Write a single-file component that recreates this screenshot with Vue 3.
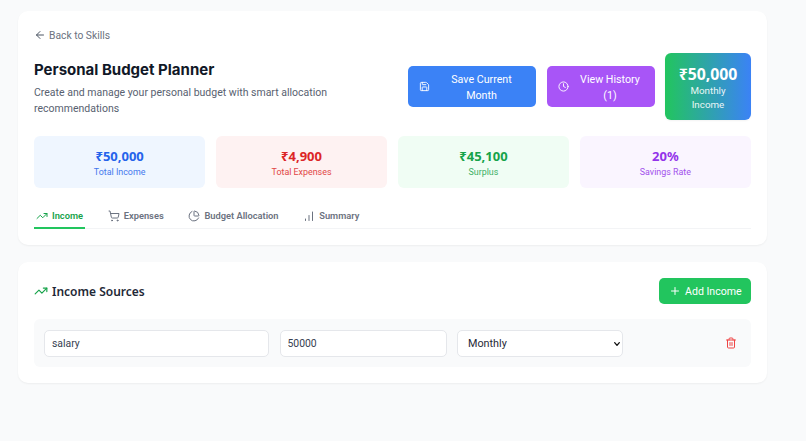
<template>
  <div class="page">
    <section class="card top">
      <a class="back">
        <svg width="12" height="12" viewBox="0 0 24 24" class="ic"><path d="m12 19-7-7 7-7" /><path d="M19 12H5" /></svg>
        <span>Back to Skills</span>
      </a>

      <div class="header">
        <div class="intro">
          <h1>Personal Budget Planner</h1>
          <p>Create and manage your personal budget with smart allocation recommendations</p>
        </div>
        <div class="actions">
          <button class="btn blue">
            <svg width="11" height="11" viewBox="0 0 24 24" class="ic">
              <path d="M15.2 3a2 2 0 0 1 1.4.6l3.8 3.8a2 2 0 0 1 .6 1.4V19a2 2 0 0 1-2 2H5a2 2 0 0 1-2-2V5a2 2 0 0 1 2-2z" />
              <path d="M17 21v-7a1 1 0 0 0-1-1H8a1 1 0 0 0-1 1v7" />
              <path d="M7 3v4a1 1 0 0 0 1 1h7" />
            </svg>
            <span>Save Current Month</span>
          </button>
          <button class="btn purple">
            <svg width="11" height="11" viewBox="0 0 24 24" class="ic"><circle cx="12" cy="12" r="10" /><path d="M12 6v6l4 2" /></svg>
            <span>View History (1)</span>
          </button>
          <div class="monthly">
            <strong>₹50,000</strong>
            <span>Monthly Income</span>
          </div>
        </div>
      </div>

      <div class="stats">
        <div v-for="s in stats" :key="s.label" class="stat" :class="s.tone">
          <strong>{{ s.value }}</strong>
          <span>{{ s.label }}</span>
        </div>
      </div>

      <nav class="tabs">
        <a class="tab active">
          <svg width="12" height="12" viewBox="0 0 24 24" class="ic"><path d="M22 7 13.5 15.5l-5-5L2 17" /><path d="M16 7h6v6" /></svg>
          Income
        </a>
        <a class="tab">
          <svg width="12" height="12" viewBox="0 0 24 24" class="ic">
            <circle cx="8" cy="21" r="1" /><circle cx="19" cy="21" r="1" />
            <path d="M2.05 2.05h2l2.66 12.42a2 2 0 0 0 2 1.58h9.78a2 2 0 0 0 1.95-1.57l1.65-7.43H5.12" />
          </svg>
          Expenses
        </a>
        <a class="tab">
          <svg width="12" height="12" viewBox="0 0 24 24" class="ic">
            <path d="M21 12c.55 0 1-.45.95-1a10 10 0 0 0-8.95-8.95c-.55-.05-1 .4-1 .95v8a1 1 0 0 0 1 1z" />
            <path d="M21.21 15.89A10 10 0 1 1 8 2.83" />
          </svg>
          Budget Allocation
        </a>
        <a class="tab">
          <svg width="12" height="12" viewBox="0 0 24 24" class="ic"><path d="M5 21v-3" /><path d="M12 21V11" /><path d="M19 21V4" /></svg>
          Summary
        </a>
      </nav>
    </section>

    <section class="card sources">
      <div class="sources-head">
        <h2>
          <svg width="14" height="14" viewBox="0 0 24 24" class="ic"><path d="M22 7 13.5 15.5l-5-5L2 17" /><path d="M16 7h6v6" /></svg>
          Income Sources
        </h2>
        <button class="add">
          <svg width="12" height="12" viewBox="0 0 24 24" class="ic"><path d="M5 12h14" /><path d="M12 5v14" /></svg>
          Add Income
        </button>
      </div>
      <div class="row">
        <input class="field name" type="text" value="salary" />
        <input class="field amount" type="text" value="50000" />
        <div class="select-wrap">
          <select class="field freq">
            <option>Monthly</option>
            <option>Yearly</option>
          </select>
          <svg width="8" height="8" viewBox="0 0 24 24" class="ic chevron"><path d="m5 8 7 8 7-8" /></svg>
        </div>
        <button class="trash">
          <svg width="12" height="12" viewBox="0 0 24 24" class="ic">
            <path d="M3 6h18" /><path d="M19 6v14a2 2 0 0 1-2 2H7a2 2 0 0 1-2-2V6" />
            <path d="M8 6V4a2 2 0 0 1 2-2h4a2 2 0 0 1 2 2v2" /><path d="M10 11v6" /><path d="M14 11v6" />
          </svg>
        </button>
      </div>
    </section>
  </div>
</template>

<script setup>
const stats = [
  { value: '₹50,000', label: 'Total Income', tone: 'is-blue' },
  { value: '₹4,900', label: 'Total Expenses', tone: 'is-red' },
  { value: '₹45,100', label: 'Surplus', tone: 'is-green' },
  { value: '20%', label: 'Savings Rate', tone: 'is-purple' },
];
</script>

<style>
html,
body {
  margin: 0;
  background: #f9fafb;
}
</style>

<style scoped>
.page {
  box-sizing: border-box;
  width: 806px;
  height: 441px;
  padding: 11px 39px 0 18px;
  font-family: Roboto, sans-serif;
  background: #f9fafb;
  overflow: hidden;
}

.card {
  background: #fff;
  border-radius: 10px;
  box-shadow: 0 1px 2px rgba(0, 0, 0, 0.05);
  padding: 16px;
}

.ic {
  fill: none;
  stroke: currentColor;
  stroke-width: 2;
  stroke-linecap: round;
  stroke-linejoin: round;
  flex: none;
}

.top {
  height: 234px;
  box-sizing: border-box;
  padding-bottom: 0;
}

.back {
  display: flex;
  align-items: center;
  gap: 3px;
  height: 16px;
  font-size: 10.3px;
  color: #6b7280;
}

.back .ic {
  color: #4b5563;
}

.header {
  display: flex;
  justify-content: space-between;
  align-items: center;
  margin-top: 10px;
}

.intro {
  width: 310px;
  padding-top: 2px;
}

h1 {
  margin: 0 0 4px;
  font-family: Inter, sans-serif;
  font-size: 15px;
  line-height: 22px;
  font-weight: 700;
  color: #111827;
}

.intro p {
  margin: 0;
  font-size: 10.5px;
  line-height: 16px;
  color: #586170;
}

.actions {
  display: flex;
  align-items: center;
  gap: 10.5px;
}

.btn {
  display: flex;
  align-items: center;
  gap: 8px;
  height: 41px;
  padding: 2px 11px 0;
  border: 0;
  border-radius: 5px;
  color: #fff;
  font: 400 10.7px/16px Roboto, sans-serif;
  text-align: center;
}

.btn .ic {
  margin-top: -2px;
}

.btn span {
  flex: 1;
}

.blue {
  width: 128px;
  background: #3b82f6;
}

.purple {
  width: 108px;
  background: #a855f7;
}

.monthly {
  box-sizing: border-box;
  width: 86px;
  height: 67px;
  padding: 11px 14px 0;
  border-radius: 6px;
  background: linear-gradient(to right, #22c55e, #3b82f6);
  color: #fff;
  text-align: center;
  box-shadow: 0 1px 2px rgba(0, 0, 0, 0.05);
}

.monthly strong {
  display: block;
  margin: 0 -10px;
  font-family: "Noto Sans", sans-serif;
  font-size: 15.8px;
  line-height: 20px;
}

.monthly span {
  display: block;
  font-size: 9.8px;
  line-height: 14px;
  opacity: 0.9;
}

.stats {
  display: grid;
  grid-template-columns: repeat(4, 1fr);
  gap: 10.67px;
  margin-top: 16px;
}

.stat {
  box-sizing: border-box;
  height: 52px;
  padding-top: 1px;
  border-radius: 6px;
  display: flex;
  flex-direction: column;
  align-items: center;
  justify-content: center;
}

.stat strong {
  font-family: "Noto Sans", sans-serif;
  font-size: 13px;
  line-height: 18px;
}

.stat span {
  font-size: 8.9px;
  line-height: 14px;
  opacity: 0.85;
}

.is-blue { background: #eff6ff; }
.is-blue strong { color: #2563eb; }
.is-blue span { color: #2563eb; }
.is-red { background: #fef2f2; }
.is-red strong { color: #dc2626; }
.is-red span { color: #dc2626; }
.is-green { background: #f0fdf4; }
.is-green strong { color: #16a34a; }
.is-green span { color: #16a34a; }
.is-purple { background: #faf5ff; }
.is-purple strong { color: #9333ea; }
.is-purple span { color: #9333ea; }

.tabs {
  display: flex;
  gap: 20.7px;
  margin-top: 16px;
  border-bottom: 1px solid #f3f4f6;
}

.tab {
  display: flex;
  align-items: center;
  gap: 4px;
  height: 23px;
  padding: 0 2px;
  font-size: 9.3px;
  font-weight: 600;
  color: #6b7280;
  border-bottom: 2px solid transparent;
  margin-bottom: -1px;
}

.tab.active {
  color: #16a34a;
  border-bottom-color: #22c55e;
}

.sources {
  margin-top: 17px;
  height: 121px;
  box-sizing: border-box;
}

.sources-head {
  display: flex;
  justify-content: space-between;
  align-items: center;
}

h2 {
  display: flex;
  align-items: center;
  gap: 4px;
  margin: 0;
  font-family: "Noto Sans", sans-serif;
  font-size: 12px;
  font-weight: 600;
  color: #1f2937;
}

h2 .ic {
  color: #16a34a;
}

.add {
  display: flex;
  align-items: center;
  gap: 4px;
  width: 92px;
  height: 26px;
  padding: 0 0 0 10px;
  border: 0;
  border-radius: 5px;
  background: #22c55e;
  color: #fff;
  white-space: nowrap;
  font: 400 10.6px Roboto, sans-serif;
}

.row {
  display: flex;
  align-items: center;
  gap: 10.5px;
  height: 48px;
  box-sizing: border-box;
  margin-top: 15px;
  padding: 0 10px;
  border-radius: 6px;
  background: #f9fafb;
}

.field {
  box-sizing: border-box;
  height: 27px;
  padding: 0 7px;
  border: 1px solid #e5e7eb;
  border-radius: 5px;
  background: #fff;
  color: #374151;
  font: 10.4px Roboto, sans-serif;
}

.name { width: 225px; }
.amount { width: 167px; }

.select-wrap {
  position: relative;
  display: flex;
}

.freq {
  width: 166px;
  padding: 0 16px 0 10px;
  appearance: none;
  color: #1f2937;
  font-size: 10.8px;
}

.chevron {
  position: absolute;
  right: 2px;
  top: 10px;
  color: #111;
  stroke-width: 4;
  pointer-events: none;
}

.trash {
  display: flex;
  margin-left: auto;
  padding: 0 4px;
  border: 0;
  background: none;
  color: #ef4444;
}
</style>
